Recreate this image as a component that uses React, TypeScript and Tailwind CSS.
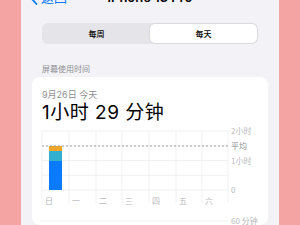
const DAYS = ['日', '一', '二', '三', '四', '五', '六']
const COLS = [10, 37, 64, 90, 117, 144, 170, 196]
const ROWS = [8, 22.75, 37.5, 52.25, 67]

function Chart() {
  return (
    <svg width="236" height="102" viewBox="0 0 236 102" className="block">
      {COLS.map((x, i) => (
        <line key={'v' + i} x1={x} y1={8} x2={x} y2={80} stroke="#ededf0" strokeWidth="0.8" />
      ))}
      {ROWS.map((y, i) => (
        <line key={'h' + i} x1={10} y1={y} x2={196} y2={y} stroke="#ededf0" strokeWidth="0.8" />
      ))}
      <rect x="17" y="23" width="13" height="5" fill="#f4a62a" />
      <rect x="17" y="28" width="13" height="10" fill="#33b0cf" />
      <rect x="17" y="38" width="13" height="29" fill="#0a7bff" />
      <line x1="10" y1="23" x2="196" y2="23" stroke="#8e8e93" strokeWidth="0.8" strokeDasharray="2 2" />
      <g fontFamily="'Noto Sans CJK SC', sans-serif" fontSize="8" fill="#b8b8bd">
        <text x="199" y="11">2小时</text>
        <text x="199" y="26" fill="#8e8e93">平均</text>
        <text x="199" y="40.5">1小时</text>
        <text x="199" y="70">0</text>
        {DAYS.map((d, i) => (
          <text key={d} x={COLS[i] + 3} y="80.5">{d}</text>
        ))}
        <text x="199" y="101">60 分钟</text>
      </g>
      <line x1="8" y1="98" x2="196" y2="98" stroke="#ededf0" strokeWidth="0.8" />
    </svg>
  )
}

export default function App() {
  return (
    <div className="w-[300px] h-[225px] overflow-hidden bg-[#f4a4a2] flex" style={{ fontFamily: "Inter, 'Noto Sans CJK SC', sans-serif" }}>
      <div className="ml-[21px] w-[258px] h-full bg-[#f2f2f7] flex flex-col">
        {/* nav bar, mostly scrolled off */}
        <div className="relative h-[14px] -mt-[9px] flex items-center justify-center">
          <div className="absolute left-[9px] flex items-center text-[#0a7bff] text-[13px]">
            <svg width="8" height="13" viewBox="0 0 8 13">
              <path d="M6.5 1 L1.5 6.5 L6.5 12" fill="none" stroke="#0a7bff" strokeWidth="1.8" strokeLinecap="round" strokeLinejoin="round" />
            </svg>
            <span className="ml-[3px]">返回</span>
          </div>
          <span className="text-[13px] font-semibold text-black">iPhone 13 Pro</span>
        </div>

        {/* segmented control */}
        <div className="mx-[21px] mt-[18px] h-[21px] rounded-[6px] bg-[#e4e4e9] p-[1px] flex text-[8px] font-medium text-black">
          <div className="flex-1 flex items-center justify-center">每周</div>
          <div className="flex-1 flex items-center justify-center bg-white rounded-[5px] shadow-[0_0_2px_rgba(0,0,0,0.15)]">每天</div>
        </div>

        <div className="mx-[21px] mt-[20px] text-[8px] leading-[10px] text-[#8e8e93]">屏幕使用时间</div>

        <div className="mx-[11px] mt-[3px] flex-1 bg-white rounded-[8px] flex flex-col">
          <div className="ml-[10px] mt-[12px] text-[9px] leading-[11px] text-[#8e8e93]">9月26日 今天</div>
          <div className="ml-[10px] mt-[2px] text-[19px] leading-[21px] tracking-[0.5px] text-black">1小时 29 分钟</div>
          <Chart />
        </div>
      </div>
    </div>
  )
}
